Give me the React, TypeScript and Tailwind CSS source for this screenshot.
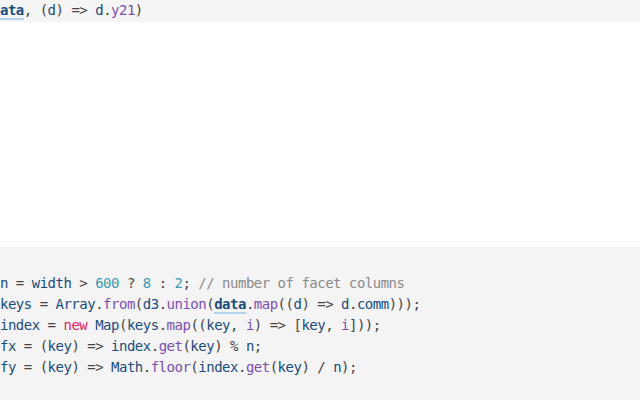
import React from 'react';

// syntax colours picked from the screenshot
const V = 'text-[#1b4c7e]'; // variables
const N = 'text-[#3a9bb4]'; // numbers
const P = 'text-[#7a4fb0]'; // properties / calls
const K = 'text-[#e0245e]'; // keywords
const O = 'text-[#444]'; // punctuation
const C = 'text-[#8a8a8a]'; // comments

const Ref: React.FC<{ children: React.ReactNode }> = ({ children }) => (
    <span className="font-bold text-[#1b4c7e] border-b-2 border-[#b4d2ec]">{children}</span>
);

const App: React.FC = () => {
    return (
        <div className="w-[640px] h-[400px] bg-white overflow-hidden font-['DejaVu_Sans_Mono',monospace] text-[14px] tracking-[-0.5px] leading-[21px] whitespace-pre">
            <div className="h-[22px] bg-[#f5f5f5]">
                <Ref>ata</Ref>
                <span className={O}>, (</span>
                <span className={V}>d</span>
                <span className={O}>) =&gt; </span>
                <span className={V}>d</span>
                <span className={O}>.</span>
                <span className={P}>y21</span>
                <span className={O}>)</span>
            </div>

            <div className="h-[219px]" />
            <div className="h-px bg-[#fafafa]" />
            <div className="h-[5px]" />

            <div className="h-[153px] bg-[#f4f4f4] pt-[26px]">
                <div>
                    <span className={V}>n</span>
                    <span className={O}> = </span>
                    <span className={V}>width</span>
                    <span className={O}> &gt; </span>
                    <span className={N}>600</span>
                    <span className={O}> ? </span>
                    <span className={N}>8</span>
                    <span className={O}> : </span>
                    <span className={N}>2</span>
                    <span className={O}>; </span>
                    <span className={C}>// number of facet columns</span>
                </div>
                <div>
                    <span className={V}>keys</span>
                    <span className={O}> = </span>
                    <span className={V}>Array</span>
                    <span className={O}>.</span>
                    <span className={P}>from</span>
                    <span className={O}>(</span>
                    <span className={V}>d3</span>
                    <span className={O}>.</span>
                    <span className={P}>union</span>
                    <span className={O}>(</span>
                    <Ref>data</Ref>
                    <span className={O}>.</span>
                    <span className={P}>map</span>
                    <span className={O}>((</span>
                    <span className={V}>d</span>
                    <span className={O}>) =&gt; </span>
                    <span className={V}>d</span>
                    <span className={O}>.</span>
                    <span className={V}>comm</span>
                    <span className={O}>)));</span>
                </div>
                <div>
                    <span className={V}>index</span>
                    <span className={O}> = </span>
                    <span className={K}>new</span>
                    <span className={O}> </span>
                    <span className={V}>Map</span>
                    <span className={O}>(</span>
                    <span className={V}>keys</span>
                    <span className={O}>.</span>
                    <span className={P}>map</span>
                    <span className={O}>((</span>
                    <span className={V}>key</span>
                    <span className={O}>, </span>
                    <span className={P}>i</span>
                    <span className={O}>) =&gt; [</span>
                    <span className={V}>key</span>
                    <span className={O}>, </span>
                    <span className={P}>i</span>
                    <span className={O}>]));</span>
                </div>
                <div>
                    <span className={V}>fx</span>
                    <span className={O}> = (</span>
                    <span className={V}>key</span>
                    <span className={O}>) =&gt; </span>
                    <span className={V}>index</span>
                    <span className={O}>.</span>
                    <span className={P}>get</span>
                    <span className={O}>(</span>
                    <span className={V}>key</span>
                    <span className={O}>) % </span>
                    <span className={V}>n</span>
                    <span className={O}>;</span>
                </div>
                <div>
                    <span className={V}>fy</span>
                    <span className={O}> = (</span>
                    <span className={V}>key</span>
                    <span className={O}>) =&gt; </span>
                    <span className={V}>Math</span>
                    <span className={O}>.</span>
                    <span className={P}>floor</span>
                    <span className={O}>(</span>
                    <span className={V}>index</span>
                    <span className={O}>.</span>
                    <span className={P}>get</span>
                    <span className={O}>(</span>
                    <span className={V}>key</span>
                    <span className={O}>) / </span>
                    <span className={V}>n</span>
                    <span className={O}>);</span>
                </div>
            </div>
        </div>
    );
};

export default App;
